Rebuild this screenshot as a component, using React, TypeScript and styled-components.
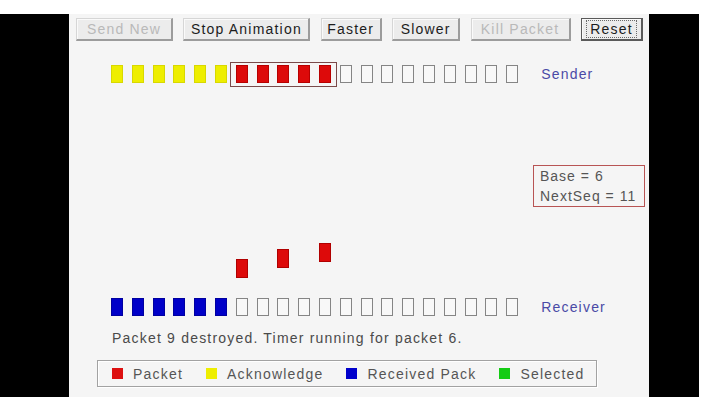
import React from "react";
import styled, { createGlobalStyle, css } from "styled-components";

const Global = createGlobalStyle`
  html, body { margin: 0; padding: 0; background: #ffffff; }
  body { font-family: "Liberation Sans", Arial, sans-serif; }
`;

const Screen = styled.div`
  margin-top: 14px;
  width: 699px;
  height: 383px;
  background: #000;
  display: flex;
  padding-left: 69px;
  box-sizing: border-box;
`;

const Panel = styled.div`
  width: 580px;
  height: 100%;
  background: #f5f5f5;
  display: flex;
  flex-direction: column;
  padding: 4px 6px 0 7px;
  box-sizing: border-box;
  font-size: 14px;
  letter-spacing: 1.2px;
`;

const Toolbar = styled.div`
  display: flex;
  justify-content: space-between;
  height: 23px;
`;

const Button = styled.button<{ $w: number; $disabled?: boolean; $focused?: boolean }>`
  width: ${(p) => p.$w}px;
  height: 23px;
  padding: 0;
  margin: 0;
  box-sizing: border-box;
  background: #ececec;
  font-family: "Liberation Sans", Arial, sans-serif;
  font-size: 14px;
  letter-spacing: 1.2px;
  color: ${(p) => (p.$disabled ? "#b9b9b9" : "#1c1c1c")};
  border-style: solid;
  border-width: 1px 2px 2px 1px;
  border-color: #d6d6d6 #9c9c9c #9c9c9c #d6d6d6;
  box-shadow: inset 1px 1px 0 #fafafa;
  display: flex;
  align-items: center;
  justify-content: center;
  ${(p) =>
    p.$focused &&
    css`
      border: 1px solid #5a5a5a;
      border-right-width: 2px;
      border-bottom-width: 2px;
    `}
`;

const FocusRing = styled.span`
  border: 1px dotted #6a6a6a;
  padding: 1px 3px;
  line-height: 14px;
`;

const Row = styled.div<{ $top: number }>`
  margin-top: ${(p) => p.$top}px;
  height: 26px;
  display: flex;
  align-items: center;
  padding-left: 35px;
`;

const Track = styled.div`
  display: flex;
  align-items: center;
  gap: 8.8px;
`;

const Window = styled.div`
  display: flex;
  align-items: center;
  gap: 8.8px;
  border: 1px solid #7a4a4a;
  padding: 2px 5px 3px;
  margin: 0 -6px;
`;

const fills: Record<string, string> = {
  ack: "#eeee00",
  packet: "#dd0a0a",
  received: "#0000c8",
  empty: "#f8f8f8",
};

const edges: Record<string, string> = {
  ack: "#d8d800",
  packet: "#b80000",
  received: "#0000a0",
  empty: "#858585",
};

const Cell = styled.div<{ $kind: string }>`
  width: 12px;
  height: 18px;
  box-sizing: border-box;
  background: ${(p) => fills[p.$kind]};
  border: 1px solid ${(p) => edges[p.$kind]};
`;

const Label = styled.span`
  margin-left: 23px;
  color: #4a4aa6;
  font-size: 14px;
  line-height: 16px;
`;

const Middle = styled.div`
  position: relative;
  height: 207px;
  display: flex;
  flex-direction: column;
  align-items: flex-end;
  padding-top: 78px;
  box-sizing: border-box;
`;

const InfoBox = styled.div`
  width: 112px;
  height: 42px;
  box-sizing: border-box;
  margin-right: -2px;
  border: 1px solid #b85454;
  padding-left: 6px;
  color: #555;
  font-size: 14px;
  line-height: 20px;
  letter-spacing: 1px;
  white-space: nowrap;
`;

const Flying = styled.div<{ $left: number; $top: number }>`
  position: absolute;
  left: ${(p) => p.$left}px;
  top: ${(p) => p.$top}px;
  width: 12px;
  height: 19px;
  box-sizing: border-box;
  background: #dd0a0a;
  border: 1px solid #b00000;
`;

const Status = styled.div`
  margin-top: 10px;
  padding-left: 36px;
  line-height: 16px;
  color: #4a4a4a;
  white-space: nowrap;
`;

const Legend = styled.div`
  margin-top: 14px;
  margin-left: 21px;
  width: 500px;
  height: 27px;
  box-sizing: border-box;
  border: 1px solid #a2a2a2;
  box-shadow: inset 1px 1px 0 #ffffff, 1px 1px 0 #ffffff;
  display: flex;
  align-items: center;
  padding-left: 14px;
  gap: 23px;
  color: #555;
`;

const LegendItem = styled.div`
  display: flex;
  align-items: center;
  gap: 10px;
  line-height: 16px;
  white-space: nowrap;
`;

const Swatch = styled.span<{ $color: string }>`
  width: 11px;
  height: 11px;
  background: ${(p) => p.$color};
`;

const SLOTS = 20;
const PITCH = 20.8;

const buttons = [
  { label: "Send New", w: 97, disabled: true },
  { label: "Stop Animation", w: 127 },
  { label: "Faster", w: 61 },
  { label: "Slower", w: 68 },
  { label: "Kill Packet", w: 100, disabled: true },
  { label: "Reset", w: 62, focused: true },
];

const flying = [
  { slot: 6, top: 172 },
  { slot: 8, top: 162 },
  { slot: 10, top: 156 },
];

const legend = [
  { label: "Packet", color: "#dd1111" },
  { label: "Acknowledge", color: "#eeee00" },
  { label: "Received Pack", color: "#0000cc" },
  { label: "Selected", color: "#14cc14" },
];

export default function App() {
  const base = 6;
  const nextSeq = 11;
  const slots = Array.from({ length: SLOTS }, (_, i) => i);
  const acked = slots.filter((n) => n < base);
  const inFlight = slots.filter((n) => n >= base && n < nextSeq);
  const unsent = slots.filter((n) => n >= nextSeq);
  const received = 6;

  return (
    <>
      <Global />
      <Screen>
        <Panel>
          <Toolbar>
            {buttons.map((b) => (
              <Button key={b.label} $w={b.w} $disabled={b.disabled} $focused={b.focused}>
                {b.focused ? <FocusRing>{b.label}</FocusRing> : b.label}
              </Button>
            ))}
          </Toolbar>

          <Row $top={20}>
            <Track>
              {acked.map((n) => (
                <Cell key={n} $kind="ack" />
              ))}
              <Window>
                {inFlight.map((n) => (
                  <Cell key={n} $kind="packet" />
                ))}
              </Window>
              {unsent.map((n) => (
                <Cell key={n} $kind="empty" />
              ))}
            </Track>
            <Label>Sender</Label>
          </Row>

          <Middle>
            <InfoBox>
              Base = {base}
              <br />
              NextSeq = {nextSeq}
            </InfoBox>
            {flying.map((f) => (
              <Flying key={f.slot} $left={35 + f.slot * PITCH - 0.2} $top={f.top} />
            ))}
          </Middle>

          <Row $top={0}>
            <Track>
              {slots.map((n) => (
                <Cell key={n} $kind={n < received ? "received" : "empty"} />
              ))}
            </Track>
            <Label>Receiver</Label>
          </Row>

          <Status>Packet 9 destroyed. Timer running for packet 6.</Status>

          <Legend>
            {legend.map((l) => (
              <LegendItem key={l.label}>
                <Swatch $color={l.color} />
                {l.label}
              </LegendItem>
            ))}
          </Legend>
        </Panel>
      </Screen>
    </>
  );
}
